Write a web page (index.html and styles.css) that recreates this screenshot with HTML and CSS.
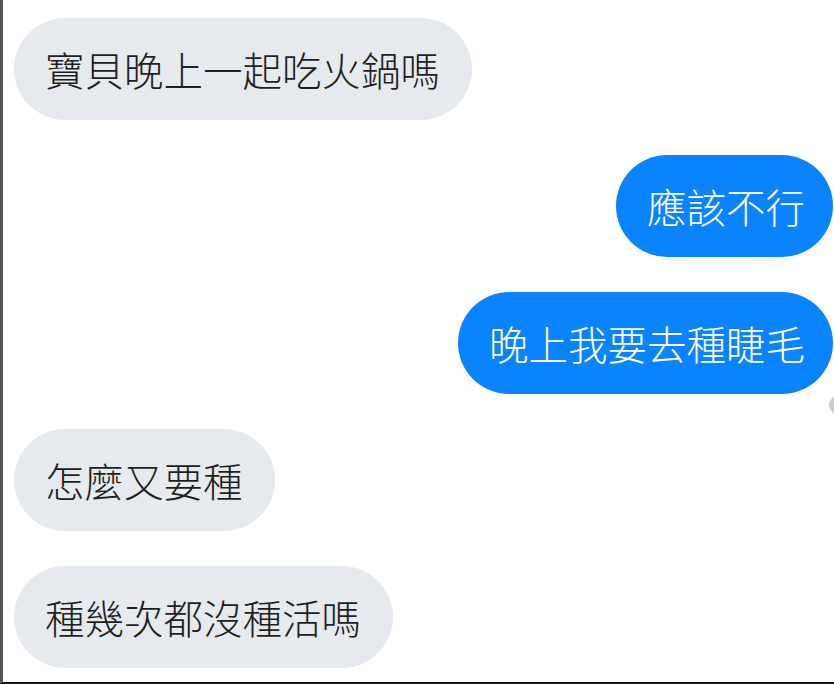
FILE: index.html
```html
<!DOCTYPE html>
<html lang="zh-Hant">
<head>
  <meta charset="UTF-8">
  <meta name="viewport" content="width=device-width, initial-scale=1">
  <title>聊天</title>
  <link rel="stylesheet" href="styles.css">
</head>
<body>
  <div class="chat">
    <div class="fila recibido"><div class="burbuja">寶貝晚上一起吃火鍋嗎</div></div>
    <div class="fila enviado"><div class="burbuja">應該不行</div></div>
    <div class="fila enviado">
      <div class="burbuja">晚上我要去種睫毛</div>
      <span class="avatar"></span>
    </div>
    <div class="fila recibido"><div class="burbuja">怎麼又要種</div></div>
    <div class="fila recibido"><div class="burbuja">種幾次都沒種活嗎</div></div>
  </div>
</body>
</html>
```

FILE: styles.css
```css
html, body {
  margin: 0;
  background: #fff;
}

.chat {
  box-sizing: border-box;
  width: 834px;
  height: 684px;
  border-left: 3px solid #555;
  border-bottom: 2px solid #111;
  padding: 18px 1px 0 11px;
  display: flex;
  flex-direction: column;
  gap: 35px;
  overflow: hidden;
  font-family: "Noto Sans CJK TC", "Noto Sans CJK SC", sans-serif;
}

.fila {
  display: flex;
  position: relative;
}

.recibido {
  justify-content: flex-start;
}

.enviado {
  justify-content: flex-end;
}

.burbuja {
  font-size: 39.5px;
  font-weight: 300;
  line-height: 40px;
  padding: 31px 31px;
  border-radius: 51px;
  white-space: nowrap;
}

.recibido .burbuja {
  background: #e6e9ed;
  color: #1d1f22;
  padding-right: 32px;
}

.enviado .burbuja {
  background: #0a84fe;
  color: #fff;
  padding-right: 28px;
}

/* avatar visto, casi fuera del borde */
.avatar {
  position: absolute;
  right: -14px;
  bottom: -20px;
  width: 18px;
  height: 18px;
  border-radius: 50%;
  background: #c9ccd1;
}
```
